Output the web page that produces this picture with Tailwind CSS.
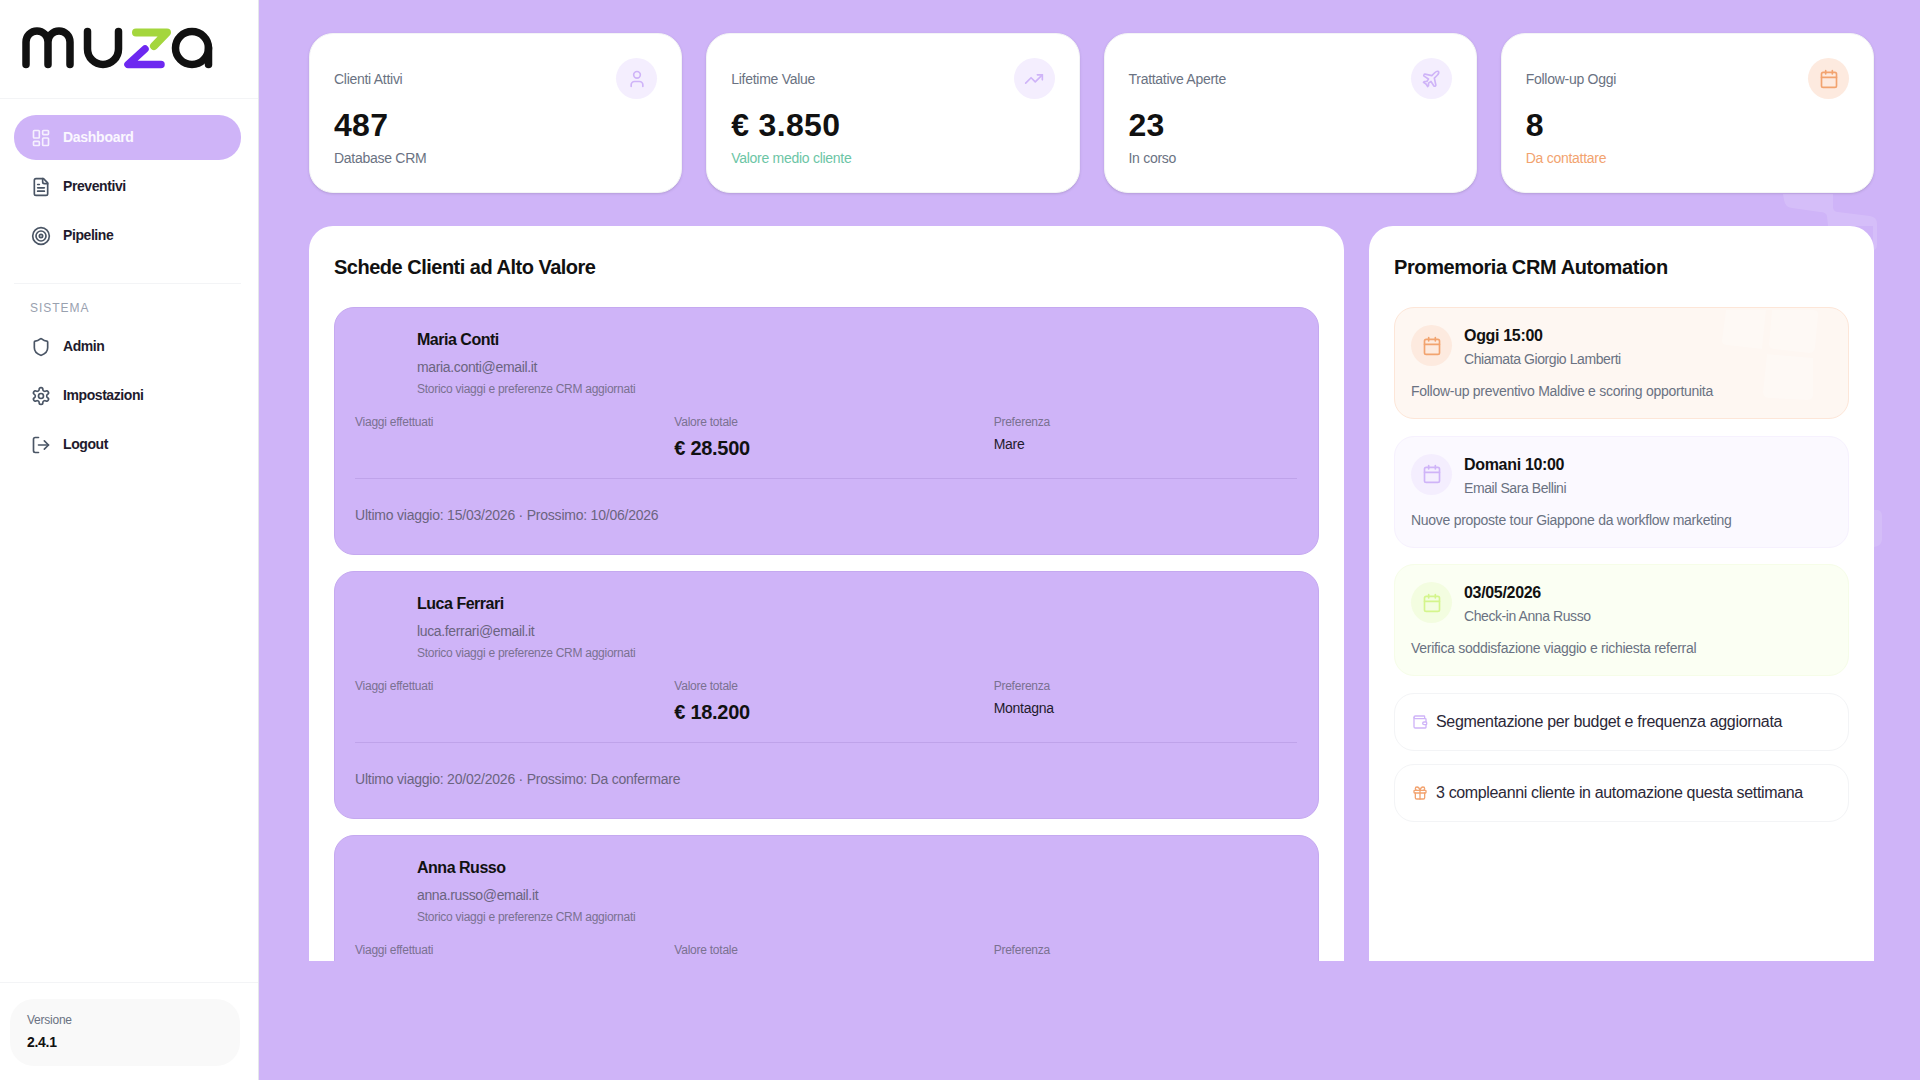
<!DOCTYPE html>
<html lang="it">
<head>
    <meta charset="UTF-8">
    <title>Muza CRM</title>
    <script src="https://cdn.jsdelivr.net/npm/@tailwindcss/browser@4"></script>
</head>
<body class="bg-[#cfb4f8] font-['Liberation_Sans',sans-serif] text-[#111] overflow-hidden">
<div class="relative flex h-[1080px] w-[1920px]">
    <!-- Sidebar -->
    <aside class="w-[259px] shrink-0 bg-white border-r border-gray-200 flex flex-col">
        <div class="h-[99px] border-b border-gray-100 pl-[20px] pt-[26px]">
            <svg width="194" height="44" viewBox="0 0 194 44" fill="none" stroke-linecap="round" stroke-linejoin="round" stroke-width="7.5">
                <path stroke="#111" d="M6 38.5V16A11 11 0 0 1 28 16V38.5M28 16A11 11 0 0 1 50 16V38.5"/>
                <path stroke="#111" d="M67.5 5.5V23A15.5 15.5 0 0 0 98.5 23V5.5"/>
                <path stroke="#a4d63d" stroke-width="8" d="M116 6.5H147L134 20"/>
                <path stroke="#6d28f0" d="M125 23L108 38.5H141"/>
                <circle stroke="#111" cx="172" cy="22" r="16.5"/>
                <path stroke="#111" d="M188.5 22V38.5"/>
            </svg>
        </div>
        <nav class="pl-[14px] pr-[17px] pt-[16px] flex flex-col gap-1">
            <a class="h-[45px] rounded-[22px] bg-[#cfb4f8] flex items-center gap-[12px] px-[17px] text-[14px] font-bold tracking-[-0.02em] text-white/90">
                <svg class="size-5 text-white/80" viewBox="0 0 24 24" fill="none" stroke="currentColor" stroke-width="2" stroke-linecap="round" stroke-linejoin="round"><rect x="3" y="3" width="7" height="9" rx="1"/><rect x="14" y="3" width="7" height="5" rx="1"/><rect x="14" y="12" width="7" height="9" rx="1"/><rect x="3" y="16" width="7" height="5" rx="1"/></svg>
                Dashboard
            </a>
            <a class="h-[45px] rounded-[22px] flex items-center gap-[12px] px-[17px] text-[14px] font-bold tracking-[-0.03em] text-[#1f1b2d]">
                <svg class="size-5 text-gray-600" viewBox="0 0 24 24" fill="none" stroke="currentColor" stroke-width="2" stroke-linecap="round" stroke-linejoin="round"><path d="M15 2H6a2 2 0 0 0-2 2v16a2 2 0 0 0 2 2h12a2 2 0 0 0 2-2V7Z"/><path d="M14 2v4a2 2 0 0 0 2 2h4"/><path d="M10 9H8"/><path d="M16 13H8"/><path d="M16 17H8"/></svg>
                Preventivi
            </a>
            <a class="h-[45px] rounded-[22px] flex items-center gap-[12px] px-[17px] text-[14px] font-bold tracking-[-0.03em] text-[#1f1b2d]">
                <svg class="size-5 text-gray-600" viewBox="0 0 24 24" fill="none" stroke="currentColor" stroke-width="2" stroke-linecap="round" stroke-linejoin="round"><circle cx="12" cy="12" r="10"/><circle cx="12" cy="12" r="6"/><circle cx="12" cy="12" r="2"/></svg>
                Pipeline
            </a>
        </nav>
        <div class="ml-[14px] mr-[17px] mt-[25px] border-t border-gray-100"></div>
        <div class="pl-[14px] pr-[17px] pt-[17px] flex flex-col gap-1">
            <p class="px-4 h-[15px] leading-[15px] text-[12px] tracking-[0.08em] text-gray-400 font-medium">SISTEMA</p>
            <a class="h-[45px] mt-[4px] rounded-[22px] flex items-center gap-[12px] px-[17px] text-[14px] font-bold tracking-[-0.03em] text-[#1f1b2d]">
                <svg class="size-5 text-gray-600" viewBox="0 0 24 24" fill="none" stroke="currentColor" stroke-width="2" stroke-linecap="round" stroke-linejoin="round"><path d="M20 13c0 5-3.5 7.5-7.66 8.95a1 1 0 0 1-.67-.01C7.5 20.5 4 18 4 13V6a1 1 0 0 1 1-1c2 0 4.5-1.2 6.24-2.72a1.17 1.17 0 0 1 1.52 0C14.51 3.81 17 5 19 5a1 1 0 0 1 1 1z"/></svg>
                Admin
            </a>
            <a class="h-[45px] rounded-[22px] flex items-center gap-[12px] px-[17px] text-[14px] font-bold tracking-[-0.03em] text-[#1f1b2d]">
                <svg class="size-5 text-gray-600" viewBox="0 0 24 24" fill="none" stroke="currentColor" stroke-width="2" stroke-linecap="round" stroke-linejoin="round"><path d="M12.22 2h-.44a2 2 0 0 0-2 2v.18a2 2 0 0 1-1 1.73l-.43.25a2 2 0 0 1-2 0l-.15-.08a2 2 0 0 0-2.73.73l-.22.38a2 2 0 0 0 .73 2.73l.15.1a2 2 0 0 1 1 1.72v.51a2 2 0 0 1-1 1.74l-.15.09a2 2 0 0 0-.73 2.73l.22.38a2 2 0 0 0 2.73.73l.15-.08a2 2 0 0 1 2 0l.43.25a2 2 0 0 1 1 1.73V20a2 2 0 0 0 2 2h.44a2 2 0 0 0 2-2v-.18a2 2 0 0 1 1-1.73l.43-.25a2 2 0 0 1 2 0l.15.08a2 2 0 0 0 2.73-.73l.22-.39a2 2 0 0 0-.73-2.73l-.15-.08a2 2 0 0 1-1-1.74v-.5a2 2 0 0 1 1-1.74l.15-.09a2 2 0 0 0 .73-2.73l-.22-.38a2 2 0 0 0-2.73-.73l-.15.08a2 2 0 0 1-2 0l-.43-.25a2 2 0 0 1-1-1.73V4a2 2 0 0 0-2-2z"/><circle cx="12" cy="12" r="3"/></svg>
                Impostazioni
            </a>
            <a class="h-[45px] rounded-[22px] flex items-center gap-[12px] px-[17px] text-[14px] font-bold tracking-[-0.03em] text-[#1f1b2d]">
                <svg class="size-5 text-gray-600" viewBox="0 0 24 24" fill="none" stroke="currentColor" stroke-width="2" stroke-linecap="round" stroke-linejoin="round"><path d="M9 21H5a2 2 0 0 1-2-2V5a2 2 0 0 1 2-2h4"/><path d="m16 17 5-5-5-5"/><path d="M21 12H9"/></svg>
                Logout
            </a>
        </div>
        <div class="mt-auto border-t border-gray-100 h-[98px] pl-[10px] pr-[18px] pt-[16px]">
            <div class="h-[67px] rounded-[24px] bg-[#f9f9f9] pl-[17px] pt-[13px]">
                <p class="text-[12px] leading-[16px] text-gray-500 tracking-[-0.02em]">Versione</p>
                <p class="mt-[5px] text-[14px] leading-[18px] font-bold tracking-[-0.02em]">2.4.1</p>
            </div>
        </div>
    </aside>

    <!-- Main -->
    <main class="flex-1 min-w-0 pl-[50px] pr-[46px] pt-[33px]">
        <div class="grid grid-cols-4 gap-6">
            <div class="h-[160px] rounded-[24px] bg-white border border-gray-100 shadow-sm p-6 flex justify-between">
                <div>
                    <p class="h-[40px] leading-[42px] text-[14px] tracking-[-0.02em] text-gray-500">Clienti Attivi</p>
                    <p class="mt-[9px] text-[32px] leading-[36px] font-bold tracking-[0.01em]">487</p>
                    <p class="mt-[5px] text-[14px] leading-[20px] tracking-[-0.02em] text-gray-500">Database CRM</p>
                </div>
                <div class="size-[41px] rounded-full bg-[#f4eefe] flex items-center justify-center text-[#cfb4f8]">
                    <svg class="size-5" viewBox="0 0 24 24" fill="none" stroke="currentColor" stroke-width="2" stroke-linecap="round" stroke-linejoin="round"><path d="M19 21v-2a4 4 0 0 0-4-4H9a4 4 0 0 0-4 4v2"/><circle cx="12" cy="7" r="4"/></svg>
                </div>
            </div>
            <div class="h-[160px] rounded-[24px] bg-white border border-gray-100 shadow-sm p-6 flex justify-between">
                <div>
                    <p class="h-[40px] leading-[42px] text-[14px] tracking-[-0.02em] text-gray-500">Lifetime Value</p>
                    <p class="mt-[9px] text-[32px] leading-[36px] font-bold tracking-[0.01em]">€ 3.850</p>
                    <p class="mt-[5px] text-[14px] leading-[20px] tracking-[-0.02em] text-[#6cc5a5]">Valore medio cliente</p>
                </div>
                <div class="size-[41px] rounded-full bg-[#f4eefe] flex items-center justify-center text-[#cfb4f8]">
                    <svg class="size-5" viewBox="0 0 24 24" fill="none" stroke="currentColor" stroke-width="2" stroke-linecap="round" stroke-linejoin="round"><path d="M22 7 13.5 15.5 8.5 10.5 2 17"/><path d="M16 7h6v6"/></svg>
                </div>
            </div>
            <div class="h-[160px] rounded-[24px] bg-white border border-gray-100 shadow-sm p-6 flex justify-between">
                <div>
                    <p class="h-[40px] leading-[42px] text-[14px] tracking-[-0.02em] text-gray-500">Trattative Aperte</p>
                    <p class="mt-[9px] text-[32px] leading-[36px] font-bold tracking-[0.01em]">23</p>
                    <p class="mt-[5px] text-[14px] leading-[20px] tracking-[-0.02em] text-gray-500">In corso</p>
                </div>
                <div class="size-[41px] rounded-full bg-[#f4eefe] flex items-center justify-center text-[#cfb4f8]">
                    <svg class="size-5" viewBox="0 0 24 24" fill="none" stroke="currentColor" stroke-width="2" stroke-linecap="round" stroke-linejoin="round"><path d="M17.8 19.2 16 11l3.5-3.5C21 6 21.5 4 21 3c-1-.5-3 0-4.5 1.5L13 8 4.8 6.2c-.5-.1-.9.1-1.1.5l-.3.5c-.2.5-.1 1 .3 1.3L9 12l-2 3H4l-1 1 3 2 2 3 1-1v-3l3-2 3.5 5.3c.3.4.8.5 1.3.3l.5-.2c.4-.3.6-.7.5-1.2z"/></svg>
                </div>
            </div>
            <div class="h-[160px] rounded-[24px] bg-white border border-gray-100 shadow-sm p-6 flex justify-between">
                <div>
                    <p class="h-[40px] leading-[42px] text-[14px] tracking-[-0.02em] text-gray-500">Follow-up Oggi</p>
                    <p class="mt-[9px] text-[32px] leading-[36px] font-bold tracking-[0.01em]">8</p>
                    <p class="mt-[5px] text-[14px] leading-[20px] tracking-[-0.02em] text-[#f2a36f]">Da contattare</p>
                </div>
                <div class="size-[41px] rounded-full bg-[#fdeadf] flex items-center justify-center text-[#f2a36f]">
                    <svg class="size-5" viewBox="0 0 24 24" fill="none" stroke="currentColor" stroke-width="2" stroke-linecap="round" stroke-linejoin="round"><path d="M8 2v4"/><path d="M16 2v4"/><rect width="18" height="18" x="3" y="4" rx="2"/><path d="M3 10h18"/></svg>
                </div>
            </div>
        </div>

        <div class="mt-[33px] h-[735px] overflow-hidden flex gap-[25px]">
            <!-- Schede clienti -->
            <section class="w-[1035px] shrink-0 bg-white rounded-t-[24px] px-[25px] pt-[25px]">
                <h2 class="text-[20px] leading-[32px] font-bold tracking-[-0.025em]">Schede Clienti ad Alto Valore</h2>
                <div class="mt-[24px] flex flex-col gap-4">
                    <article class="h-[248px] rounded-[20px] bg-[#cfb4f8] border border-[#c5a9f0] pl-[20px] pr-[21px] pt-[20px]">
                        <div class="flex gap-[14px]">
                            <div class="w-12 shrink-0"></div>
                            <div>
                                <p class="text-[16px] leading-[24px] font-bold tracking-[-0.03em]">Maria Conti</p>
                                <p class="mt-[5px] text-[14px] leading-[20px] tracking-[-0.025em] text-[#6b6480]">maria.conti@email.it</p>
                                <p class="mt-[4px] text-[12px] leading-[16px] tracking-[-0.022em] text-[#7a7191]">Storico viaggi e preferenze CRM aggiornati</p>
                            </div>
                        </div>
                        <div class="mt-[17px] grid grid-cols-3 gap-4 pb-[16px] border-b border-[#bfa3ea]">
                            <div>
                                <p class="text-[12px] leading-[16px] tracking-[-0.02em] text-[#7a7191]">Viaggi effettuati</p>
                            </div>
                            <div>
                                <p class="text-[12px] leading-[16px] tracking-[-0.02em] text-[#7a7191]">Valore totale</p>
                                <p class="mt-[4px] text-[20px] leading-[28px] font-bold tracking-[-0.015em]">€ 28.500</p>
                            </div>
                            <div>
                                <p class="text-[12px] leading-[16px] tracking-[-0.02em] text-[#7a7191]">Preferenza</p>
                                <p class="mt-[4px] text-[14px] leading-[20px] tracking-[-0.02em] text-[#1f1b2d]">Mare</p>
                            </div>
                        </div>
                        <p class="mt-[26px] text-[14px] leading-[20px] tracking-[-0.016em] text-[#6b6480]">Ultimo viaggio: 15/03/2026 · Prossimo: 10/06/2026</p>
                    </article>
                    <article class="h-[248px] rounded-[20px] bg-[#cfb4f8] border border-[#c5a9f0] pl-[20px] pr-[21px] pt-[20px]">
                        <div class="flex gap-[14px]">
                            <div class="w-12 shrink-0"></div>
                            <div>
                                <p class="text-[16px] leading-[24px] font-bold tracking-[-0.03em]">Luca Ferrari</p>
                                <p class="mt-[5px] text-[14px] leading-[20px] tracking-[-0.025em] text-[#6b6480]">luca.ferrari@email.it</p>
                                <p class="mt-[4px] text-[12px] leading-[16px] tracking-[-0.022em] text-[#7a7191]">Storico viaggi e preferenze CRM aggiornati</p>
                            </div>
                        </div>
                        <div class="mt-[17px] grid grid-cols-3 gap-4 pb-[16px] border-b border-[#bfa3ea]">
                            <div>
                                <p class="text-[12px] leading-[16px] tracking-[-0.02em] text-[#7a7191]">Viaggi effettuati</p>
                            </div>
                            <div>
                                <p class="text-[12px] leading-[16px] tracking-[-0.02em] text-[#7a7191]">Valore totale</p>
                                <p class="mt-[4px] text-[20px] leading-[28px] font-bold tracking-[-0.015em]">€ 18.200</p>
                            </div>
                            <div>
                                <p class="text-[12px] leading-[16px] tracking-[-0.02em] text-[#7a7191]">Preferenza</p>
                                <p class="mt-[4px] text-[14px] leading-[20px] tracking-[-0.02em] text-[#1f1b2d]">Montagna</p>
                            </div>
                        </div>
                        <p class="mt-[26px] text-[14px] leading-[20px] tracking-[-0.016em] text-[#6b6480]">Ultimo viaggio: 20/02/2026 · Prossimo: Da confermare</p>
                    </article>
                    <article class="h-[248px] rounded-[20px] bg-[#cfb4f8] border border-[#c5a9f0] pl-[20px] pr-[21px] pt-[20px]">
                        <div class="flex gap-[14px]">
                            <div class="w-12 shrink-0"></div>
                            <div>
                                <p class="text-[16px] leading-[24px] font-bold tracking-[-0.03em]">Anna Russo</p>
                                <p class="mt-[5px] text-[14px] leading-[20px] tracking-[-0.025em] text-[#6b6480]">anna.russo@email.it</p>
                                <p class="mt-[4px] text-[12px] leading-[16px] tracking-[-0.022em] text-[#7a7191]">Storico viaggi e preferenze CRM aggiornati</p>
                            </div>
                        </div>
                        <div class="mt-[17px] grid grid-cols-3 gap-4 pb-[16px]">
                            <p class="text-[12px] leading-[16px] tracking-[-0.02em] text-[#7a7191]">Viaggi effettuati</p>
                            <p class="text-[12px] leading-[16px] tracking-[-0.02em] text-[#7a7191]">Valore totale</p>
                            <p class="text-[12px] leading-[16px] tracking-[-0.02em] text-[#7a7191]">Preferenza</p>
                        </div>
                    </article>
                </div>
            </section>

            <!-- Promemoria -->
            <section class="flex-1 min-w-0 bg-white rounded-t-[24px] px-[25px] pt-[25px]">
                <h2 class="text-[20px] leading-[32px] font-bold tracking-[-0.02em]">Promemoria CRM Automation</h2>
                <div class="mt-[24px] flex flex-col gap-[16.5px]">
                    <div class="h-[112px] rounded-[20px] bg-[#fef7f2] border border-[#fde6d8] pl-[16px] pr-[17px] py-[17px]">
                        <div class="flex gap-3">
                            <div class="size-[41px] rounded-full bg-[#fdeadf] flex items-center justify-center text-[#f2a36f]">
                                <svg class="size-5" viewBox="0 0 24 24" fill="none" stroke="currentColor" stroke-width="2" stroke-linecap="round" stroke-linejoin="round"><path d="M8 2v4"/><path d="M16 2v4"/><rect width="18" height="18" x="3" y="4" rx="2"/><path d="M3 10h18"/></svg>
                            </div>
                            <div>
                                <p class="text-[16px] leading-[22px] font-bold tracking-[-0.02em]">Oggi 15:00</p>
                                <p class="text-[14px] leading-[24px] tracking-[-0.03em] text-gray-500">Chiamata Giorgio Lamberti</p>
                            </div>
                        </div>
                        <p class="mt-[10px] text-[14px] leading-[20px] tracking-[-0.02em] text-gray-500">Follow-up preventivo Maldive e scoring opportunita</p>
                    </div>
                    <div class="h-[112px] rounded-[20px] bg-[#fbf9ff] border border-[#f6f1fe] pl-[16px] pr-[17px] py-[17px]">
                        <div class="flex gap-3">
                            <div class="size-[41px] rounded-full bg-[#f4eefe] flex items-center justify-center text-[#cfb4f8]">
                                <svg class="size-5" viewBox="0 0 24 24" fill="none" stroke="currentColor" stroke-width="2" stroke-linecap="round" stroke-linejoin="round"><path d="M8 2v4"/><path d="M16 2v4"/><rect width="18" height="18" x="3" y="4" rx="2"/><path d="M3 10h18"/></svg>
                            </div>
                            <div>
                                <p class="text-[16px] leading-[22px] font-bold tracking-[-0.02em]">Domani 10:00</p>
                                <p class="text-[14px] leading-[24px] tracking-[-0.03em] text-gray-500">Email Sara Bellini</p>
                            </div>
                        </div>
                        <p class="mt-[10px] text-[14px] leading-[20px] tracking-[-0.02em] text-gray-500">Nuove proposte tour Giappone da workflow marketing</p>
                    </div>
                    <div class="h-[112px] rounded-[20px] bg-[#fbfff3] border border-[#f6fde8] pl-[16px] pr-[17px] py-[17px]">
                        <div class="flex gap-3">
                            <div class="size-[41px] rounded-full bg-[#f3fde0] flex items-center justify-center text-[#d4f58c]">
                                <svg class="size-5" viewBox="0 0 24 24" fill="none" stroke="currentColor" stroke-width="2" stroke-linecap="round" stroke-linejoin="round"><path d="M8 2v4"/><path d="M16 2v4"/><rect width="18" height="18" x="3" y="4" rx="2"/><path d="M3 10h18"/></svg>
                            </div>
                            <div>
                                <p class="text-[16px] leading-[22px] font-bold tracking-[-0.02em]">03/05/2026</p>
                                <p class="text-[14px] leading-[24px] tracking-[-0.03em] text-gray-500">Check-in Anna Russo</p>
                            </div>
                        </div>
                        <p class="mt-[10px] text-[14px] leading-[20px] tracking-[-0.02em] text-gray-500">Verifica soddisfazione viaggio e richiesta referral</p>
                    </div>
                </div>
                <div class="mt-[17px] flex flex-col gap-[13px]">
                    <div class="h-[58px] rounded-[20px] border border-gray-100 flex items-center gap-[8px] px-[17px] text-[16px] tracking-[-0.02em] text-[#2b2838]">
                        <svg class="size-4 text-[#cfb4f8]" viewBox="0 0 24 24" fill="none" stroke="currentColor" stroke-width="2" stroke-linecap="round" stroke-linejoin="round"><path d="M19 7V4a1 1 0 0 0-1-1H5a2 2 0 0 0 0 4h15a1 1 0 0 1 1 1v4h-3a2 2 0 0 0 0 4h3a1 1 0 0 0 1-1v-2a1 1 0 0 0-1-1"/><path d="M3 5v14a2 2 0 0 0 2 2h15a1 1 0 0 0 1-1v-4"/></svg>
                        Segmentazione per budget e frequenza aggiornata
                    </div>
                    <div class="h-[58px] rounded-[20px] border border-gray-100 flex items-center gap-[8px] px-[17px] text-[16px] tracking-[-0.022em] text-[#2b2838]">
                        <svg class="size-4 text-[#f2a36f]" viewBox="0 0 24 24" fill="none" stroke="currentColor" stroke-width="2" stroke-linecap="round" stroke-linejoin="round"><rect x="3" y="8" width="18" height="4" rx="1"/><path d="M12 8v13"/><path d="M19 12v7a2 2 0 0 1-2 2H7a2 2 0 0 1-2-2v-7"/><path d="M7.5 8a2.5 2.5 0 0 1 0-5A4.8 8 0 0 1 12 8a4.8 8 0 0 1 4.5-5 2.5 2.5 0 0 1 0 5"/></svg>
                        3 compleanni cliente in automazione questa settimana
                    </div>
                </div>
            </section>
        </div>
    </main>

    <!-- decorative watermark over the page -->
    <svg class="absolute inset-0 pointer-events-none" width="1920" height="1080" viewBox="0 0 1920 1080" fill="#fff">
        <path opacity=".14" d="M1783 194H1833V208Q1834 212 1838 212L1870 216Q1877 217 1877 224V244Q1877 250 1873 250V226H1828L1827 216Q1826 212 1820 212L1792 208Q1785 207 1784 200Z"/>
        <path opacity=".12" d="M1874 510H1878Q1882 511 1882 516V540Q1881 546 1874 547Z"/>
        <g opacity=".25">
            <path d="M1726 310H1766L1762 349L1726 345Q1721 344 1722 340Z"/>
            <path d="M1772 310H1814Q1819 311 1818 316L1815 348Q1814 353 1809 353L1773 349Q1769 348 1769 344Z"/>
            <path d="M1767 354L1813 358V396Q1812 400 1807 400L1768 398Q1763 397 1763 392Z"/>
        </g>
    </svg>
</div>
</body>
</html>
